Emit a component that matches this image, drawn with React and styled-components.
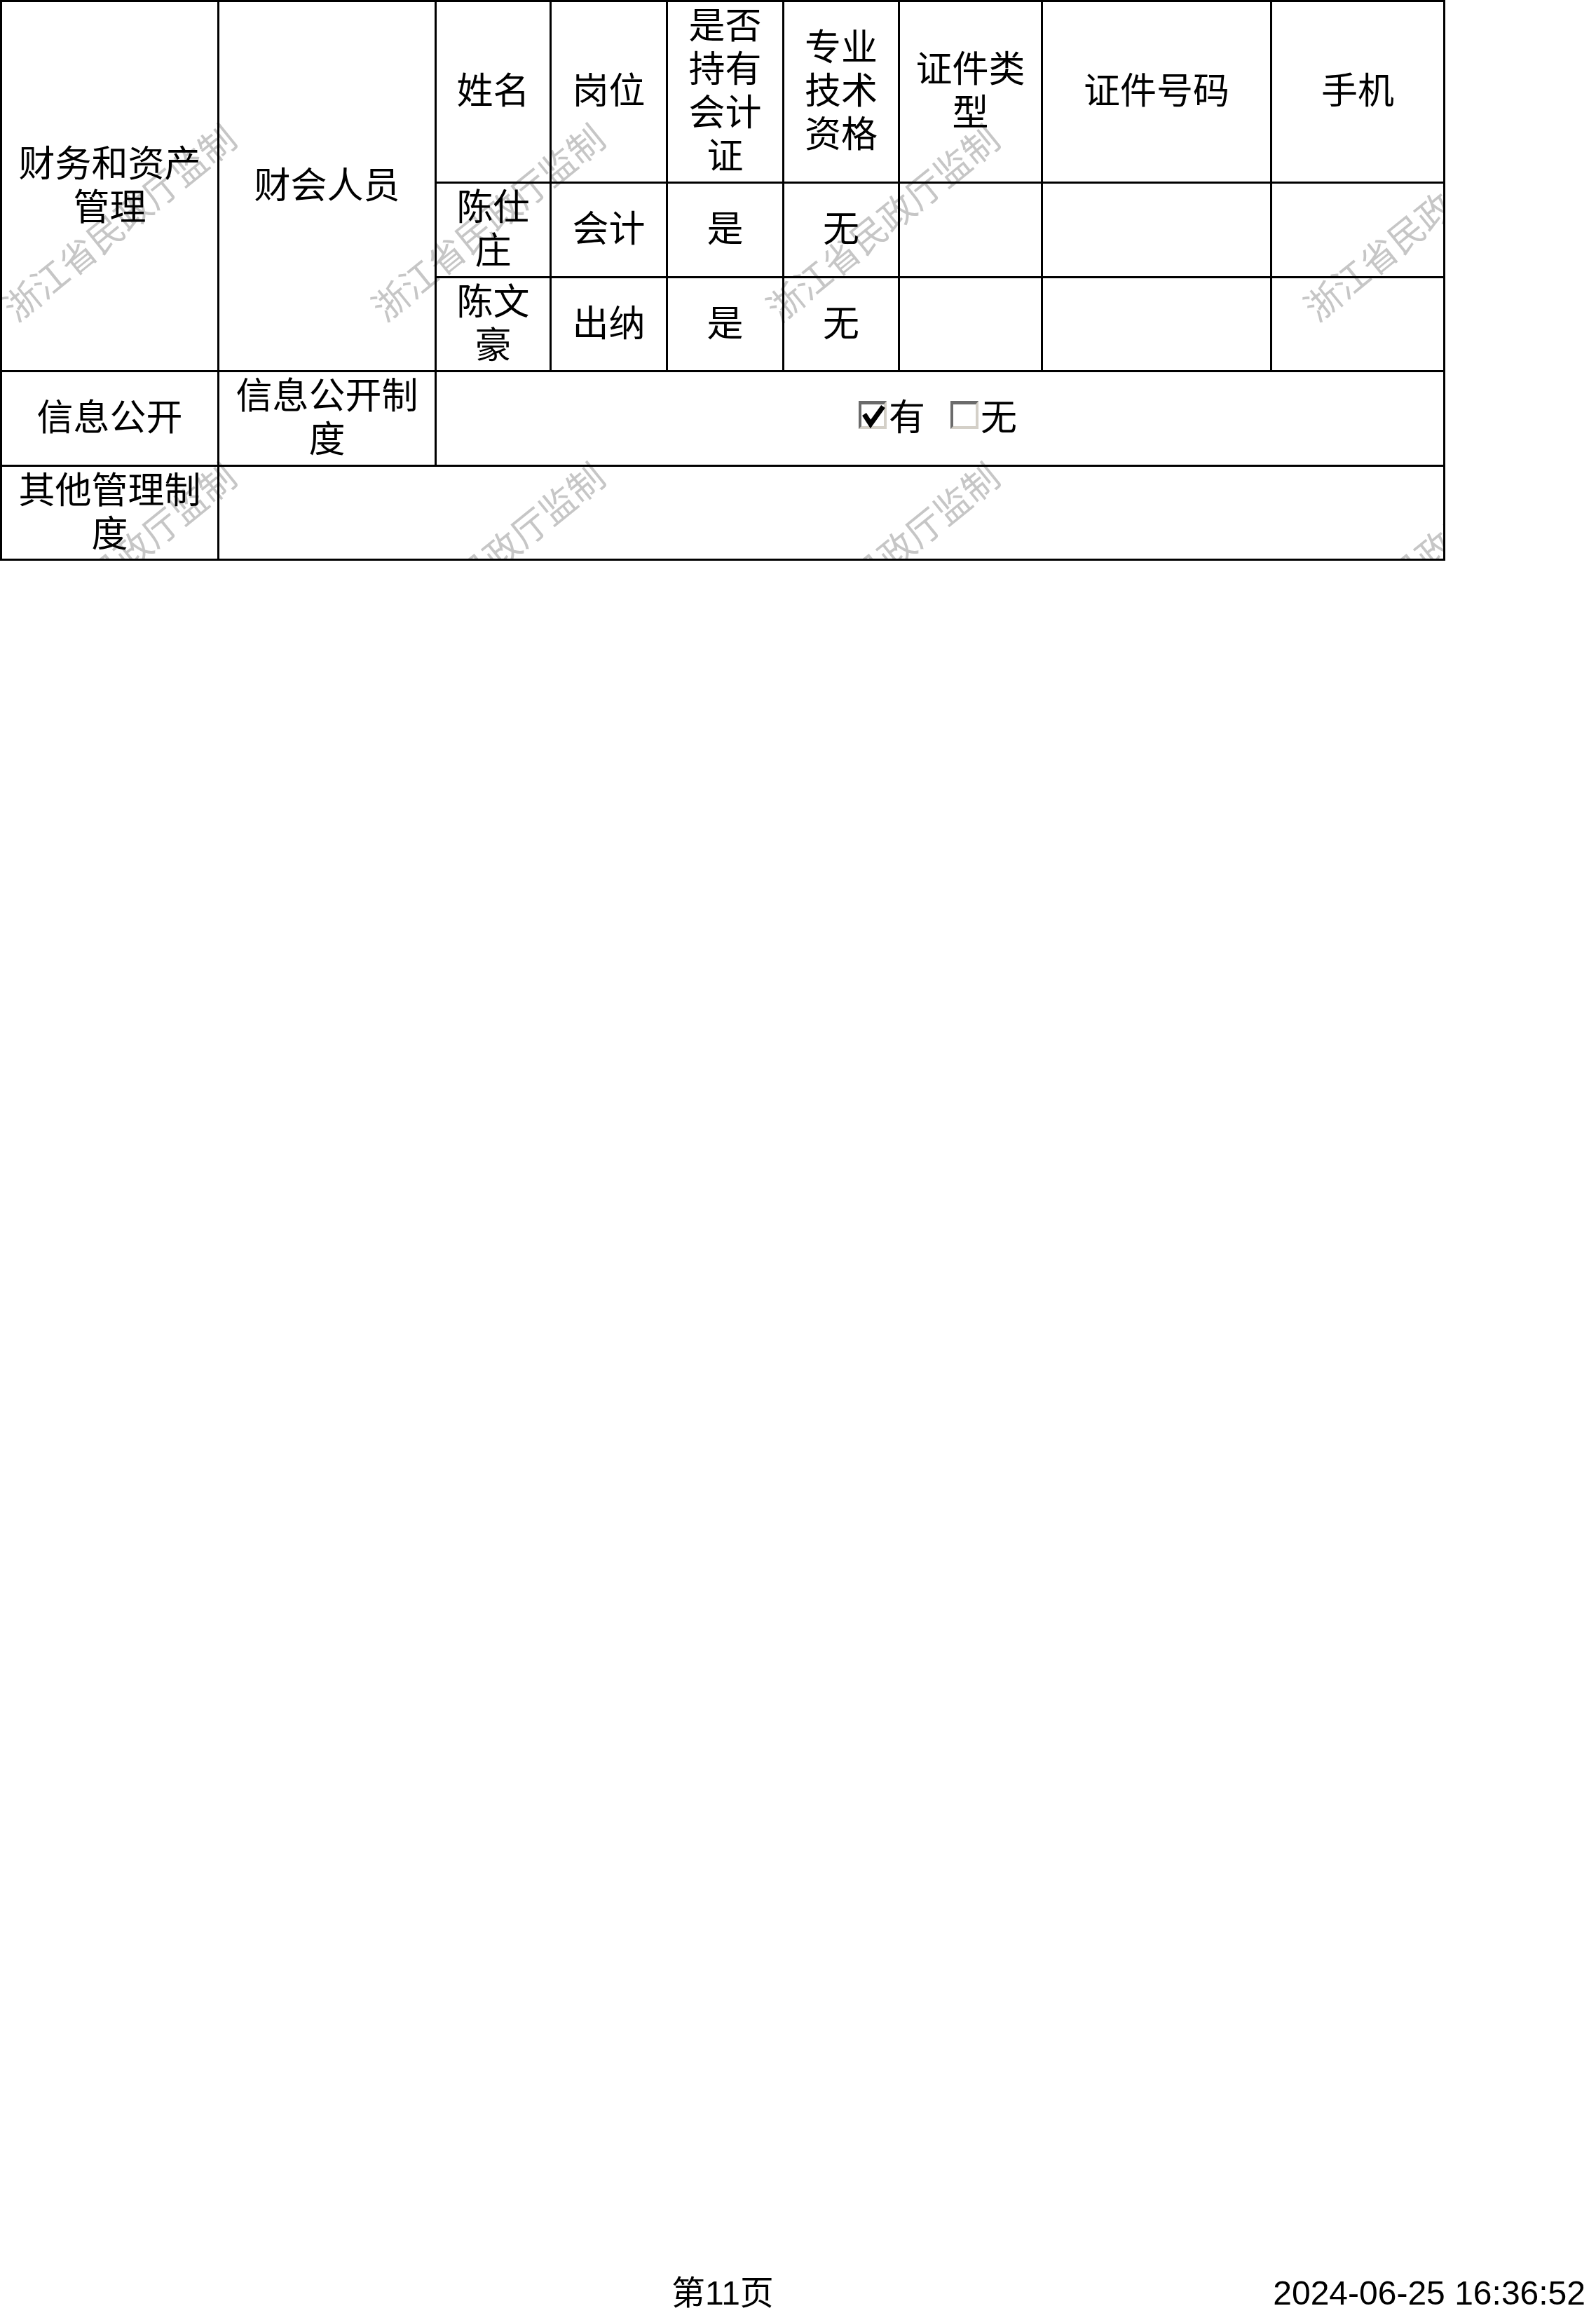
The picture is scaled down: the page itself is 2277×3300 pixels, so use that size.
import React from 'react'
import styled, { createGlobalStyle } from 'styled-components';

const GlobalStyle = createGlobalStyle`
html, body {
  margin: 0;
  padding: 0;
  background: #fff;
}
body {
  font-family: "Noto Sans CJK SC", sans-serif;
  color: #000;
}
`;

const Page = styled.div`
width: 2277px;
height: 3300px;
display: flex;
flex-direction: column;
overflow: hidden;
`;

const TableWrap = styled.div`
position: relative;
width: 2062px;
overflow: hidden;
`;

const Sheet = styled.div`
display: grid;
grid-template-columns: 307px 307px 161px 163px 163px 162px 201px 324px 244px;
grid-template-rows: 256px 132px 131px 132px 131px;
gap: 3px;
padding: 3px;
background: #000;
`;

const Cell = styled.div`
background: #fff;
display: flex;
align-items: center;
justify-content: center;
text-align: center;
padding: 0 6px 10px;
font-size: 52px;
line-height: 62px;
grid-column: ${p => p.$cols ? `span ${p.$cols}` : 'auto'};
grid-row: ${p => p.$rows ? `span ${p.$rows}` : 'auto'};
`;

const Options = styled.div`
display: flex;
align-items: center;
gap: 36px;
margin-left: -6px;
`;

const Option = styled.span`
display: flex;
align-items: center;
gap: 3px;
`;

const WatermarkLayer = styled.div`
position: absolute;
inset: 0;
pointer-events: none;
mix-blend-mode: multiply;
`;

const Watermark = styled.span`
position: absolute;
left: ${p => p.$x}px;
top: ${p => p.$y}px;
transform: translate(-50%, -50%) rotate(-39deg);
white-space: nowrap;
font-size: 51px;
line-height: 1;
color: #c6c6c6;
`;

const Footer = styled.div`
margin-top: auto;
display: flex;
align-items: baseline;
padding: 0 15px 4px 958px;
font-family: "Liberation Sans", "Noto Sans CJK SC", sans-serif;
font-size: 48px;
line-height: 48px;
`;

const PageNo = styled.span`
`;

const Stamp = styled.span`
margin-left: auto;
`;

const CheckBox = ({ checked }) => (
  <svg width="40" height="40" viewBox="0 0 40 40">
    <rect x="0" y="0" width="40" height="40" fill="#d4d0c8" />
    <polygon points="0,0 40,0 36,5 4,5 4,36 0,40" fill="#6b6b6b" />
    <rect x="4" y="5" width="32" height="31" fill="#fff" />
    {checked && (
      <polyline points="8,19 17,33 35,8" fill="none" stroke="#000" strokeWidth="7" strokeLinejoin="miter" />
    )}
  </svg>
);

const marks = [
  [169, 316], [695, 316], [1258, 317], [2025, 316],
  [169, 799], [695, 799], [1258, 799], [2025, 799],
];

const App = () => {
  return (
    <>
      <GlobalStyle />
      <Page>
        <TableWrap>
          <Sheet>
            <Cell $rows={3}>财务和资产管理</Cell>
            <Cell $rows={3}>财会人员</Cell>
            <Cell>姓名</Cell>
            <Cell>岗位</Cell>
            <Cell>是否持有会计证</Cell>
            <Cell>专业技术资格</Cell>
            <Cell>证件类型</Cell>
            <Cell>证件号码</Cell>
            <Cell>手机</Cell>

            <Cell>陈仕庄</Cell>
            <Cell>会计</Cell>
            <Cell>是</Cell>
            <Cell>无</Cell>
            <Cell />
            <Cell />
            <Cell />

            <Cell>陈文豪</Cell>
            <Cell>出纳</Cell>
            <Cell>是</Cell>
            <Cell>无</Cell>
            <Cell />
            <Cell />
            <Cell />

            <Cell>信息公开</Cell>
            <Cell>信息公开制度</Cell>
            <Cell $cols={7}>
              <Options>
                <Option><CheckBox checked />有</Option>
                <Option><CheckBox />无</Option>
              </Options>
            </Cell>

            <Cell>其他管理制度</Cell>
            <Cell $cols={8} />
          </Sheet>
          <WatermarkLayer>
            {marks.map(([x, y], i) => (
              <Watermark key={i} $x={x} $y={y}>浙江省民政厅监制</Watermark>
            ))}
          </WatermarkLayer>
        </TableWrap>
        <Footer>
          <PageNo>第11页</PageNo>
          <Stamp>2024-06-25 16:36:52</Stamp>
        </Footer>
      </Page>
    </>
  )
}

export default App
